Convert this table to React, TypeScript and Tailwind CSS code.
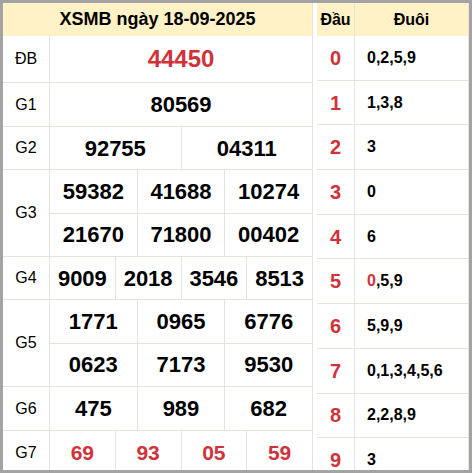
import React from "react";

const B = "border-[#e6e2dc]";

function Cell({ children, cls = "" }: { children: React.ReactNode; cls?: string }) {
  return (
    <div className={`flex items-center justify-center border-l ${B} ${cls}`}>{children}</div>
  );
}

function Row({
  label,
  h,
  children,
}: {
  label: string;
  h: string;
  children: React.ReactNode;
}) {
  return (
    <div className={`flex border-b ${B} ${h}`}>
      <div className="w-[46px] shrink-0 flex items-center justify-center text-[16px] text-black">
        {label}
      </div>
      <div className="flex-1 flex flex-col">{children}</div>
    </div>
  );
}

function Line({ nums, cols, h, cls = "" }: { nums: string[]; cols: string; h?: string; cls?: string }) {
  return (
    <div className={`grid ${cols} flex-1 ${h ?? ""}`}>
      {nums.map((n, i) => (
        <Cell key={i} cls={cls}>
          {n}
        </Cell>
      ))}
    </div>
  );
}

export default function App() {
  const loto: [string, string[]][] = [
    ["0", ["0,2,5,9"]],
    ["1", ["1,3,8"]],
    ["2", ["3"]],
    ["3", ["0"]],
    ["4", ["6"]],
    ["5", ["0r", ",5,9"]],
    ["6", ["5,9,9"]],
    ["7", ["0,1,3,4,5,6"]],
    ["8", ["2,2,8,9"]],
    ["9", ["3"]],
  ];
  const num = "text-[22px] font-bold text-black";
  return (
    <div
      className="w-[472px] h-[473px] border-[3px] border-[#a3a3a3] overflow-hidden bg-white flex gap-[4px]"
      style={{ fontFamily: '"Liberation Sans", Arial, sans-serif' }}
    >
      <div className={`w-[310px] shrink-0 flex flex-col border-r ${B}`}>
        <div className="h-[33px] shrink-0 bg-[#fff2c6] flex items-center justify-center text-[18px] font-bold text-black">
          XSMB ngày 18-09-2025
        </div>
        <Row label="ĐB" h="h-[47px] shrink-0">
          <Line nums={["44450"]} cols="grid-cols-1" cls="text-[24px] font-bold text-[#d1323a]" />
        </Row>
        <Row label="G1" h="h-[44px] shrink-0">
          <Line nums={["80569"]} cols="grid-cols-1" cls={num} />
        </Row>
        <Row label="G2" h="h-[43px] shrink-0">
          <Line nums={["92755", "04311"]} cols="grid-cols-2" cls={num} />
        </Row>
        <Row label="G3" h="h-[87px] shrink-0">
          <Line nums={["59382", "41688", "10274"]} cols="grid-cols-3" cls={num} h={`border-b ${B}`} />
          <Line nums={["21670", "71800", "00402"]} cols="grid-cols-3" cls={num} />
        </Row>
        <Row label="G4" h="h-[43px] shrink-0">
          <Line nums={["9009", "2018", "3546", "8513"]} cols="grid-cols-4" cls={num} />
        </Row>
        <Row label="G5" h="h-[87px] shrink-0">
          <Line nums={["1771", "0965", "6776"]} cols="grid-cols-3" cls={num} h={`border-b ${B}`} />
          <Line nums={["0623", "7173", "9530"]} cols="grid-cols-3" cls={num} />
        </Row>
        <Row label="G6" h="h-[44px] shrink-0">
          <Line nums={["475", "989", "682"]} cols="grid-cols-3" cls={num} />
        </Row>
        <Row label="G7" h="h-[44px] shrink-0">
          <Line
            nums={["69", "93", "05", "59"]}
            cols="grid-cols-4"
            cls="text-[21px] font-bold text-[#d1323a]"
          />
        </Row>
      </div>
      <div className={`flex-1 flex flex-col border-r ${B}`}>
        <div className="h-[33px] shrink-0 bg-[#fff2c6] flex text-[16px] font-bold text-black">
          <div className={`w-[38px] flex items-center justify-center border-r ${B}`}>Đầu</div>
          <div className="flex-1 flex items-center justify-center">Đuôi</div>
        </div>
        {loto.map(([d, tails]) => (
          <div key={d} className={`h-[44.7px] shrink-0 flex border-b ${B}`}>
            <div
              className={`w-[38px] flex items-center justify-center border-r ${B} text-[20px] font-bold text-[#d1323a]`}
            >
              {d}
            </div>
            <div className="flex-1 flex items-center pl-[12px] text-[16px] font-bold text-black">
              {tails.map((t, i) =>
                t.endsWith("r") ? (
                  <span key={i} className="text-[#d1323a]">
                    {t.slice(0, -1)}
                  </span>
                ) : (
                  <span key={i}>{t}</span>
                )
              )}
            </div>
          </div>
        ))}
      </div>
    </div>
  );
}
